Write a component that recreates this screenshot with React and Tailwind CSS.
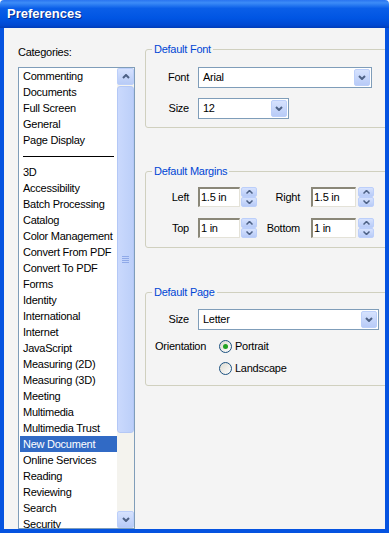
import React from "react"

const categories = [
    "Commenting",
    "Documents",
    "Full Screen",
    "General",
    "Page Display",
    "-",
    "3D",
    "Accessibility",
    "Batch Processing",
    "Catalog",
    "Color Management",
    "Convert From PDF",
    "Convert To PDF",
    "Forms",
    "Identity",
    "International",
    "Internet",
    "JavaScript",
    "Measuring (2D)",
    "Measuring (3D)",
    "Meeting",
    "Multimedia",
    "Multimedia Trust",
    "New Document",
    "Online Services",
    "Reading",
    "Reviewing",
    "Search",
    "Security"
]

const Chevron = ({ up }) => (
    <svg width="8" height="5" viewBox="0 0 8 5">
        <path d={up ? "M1 4 L4 1 L7 4" : "M1 1 L4 4 L7 1"} fill="none" stroke="#4d6185" strokeWidth="2" />
    </svg>
)

const SmallArrow = ({ up }) => (
    <svg width="7" height="4" viewBox="0 0 7 4">
        <path d={up ? "M0.5 3.5 L3.5 0.5 L6.5 3.5" : "M0.5 0.5 L3.5 3.5 L6.5 0.5"} fill="none" stroke="#4d6185" strokeWidth="1.5" />
    </svg>
)

const XpButton = ({ className, children }) => (
    <div className={`rounded-[2px] border border-[#bccffa] bg-[linear-gradient(to_bottom,#d6e2fe,#b8cbf7)] flex items-center justify-center ${className}`}>
        {children}
    </div>
)

const Select = ({ value, width }) => (
    <div className={`h-[21px] ${width} border border-[#7f9db9] bg-white flex items-stretch p-[1px]`}>
        <span className="flex-1 pl-[3px] leading-[17px]">{value}</span>
        <XpButton className="w-[16px]">
            <Chevron />
        </XpButton>
    </div>
)

const Spinner = () => (
    <div className="w-[16px] h-[20px] flex flex-col">
        <XpButton className="flex-1">
            <SmallArrow up />
        </XpButton>
        <XpButton className="flex-1">
            <SmallArrow />
        </XpButton>
    </div>
)

const Field = ({ value, width }) => (
    <div className={`h-[20px] ${width} bg-white border-t-2 border-l-2 border-t-[#8a8778] border-l-[#8a8778] border-b border-r border-b-[#e4e2d8] border-r-[#e4e2d8] pl-[1px] leading-[17px]`}>
        {value}
    </div>
)

const Radio = ({ checked, label }) => (
    <div className="flex items-center h-[16px]">
        <div className="w-[13px] h-[13px] rounded-full border border-[#1c5180] bg-[linear-gradient(135deg,#dcdad0,#ffffff)] flex items-center justify-center">
            {checked && <div className="w-[5px] h-[5px] rounded-full bg-[#21a121]" />}
        </div>
        <span className="ml-[3px]">{label}</span>
    </div>
)

const Group = ({ title, className, children }) => (
    <fieldset className={`border border-[#d0d0bf] rounded-[3px] ${className}`}>
        <legend className="ml-[6px] px-[2px] leading-[14px] text-[#0046d5]">{title}</legend>
        {children}
    </fieldset>
)

export default function App() {
    return (
        <div className="w-[389px] h-[533px] flex flex-col font-['Liberation_Sans',Arial,sans-serif] text-[11px] tracking-[-0.25px] text-black">
            {/* Title bar */}
            <div className="h-[28px] flex items-center pl-[7px] rounded-t-[4px] bg-[linear-gradient(to_bottom,#2a74f0_0%,#3d8cf7_10%,#0a5ee8_30%,#0055e3_65%,#0048d2_90%,#003cb8_100%)]">
                <span className="text-white font-bold text-[13px] tracking-normal [text-shadow:1px_1px_0_#0a2a8a]">Preferences</span>
            </div>

            {/* Body */}
            <div className="flex-1 flex overflow-hidden bg-[#f4f4f4] border-x-4 border-b-4 border-[#0553e0] pl-[14px]">
                {/* Categories */}
                <div className="w-[117px] flex flex-col shrink-0">
                    <div className="mt-[16px] h-[16px] leading-[16px]">Categories:</div>
                    <div className="mt-[7px] h-[462px] border border-[#7f9db9] bg-white flex overflow-hidden">
                        <div className="flex-1 overflow-hidden">
                            {categories.map((c, i) =>
                                c === "-" ? (
                                    <div key={i} className="h-[16px] flex items-center pl-[4px] pr-[3px]">
                                        <div className="h-[1px] w-full bg-black mt-[1px]" />
                                    </div>
                                ) : (
                                    <div
                                        key={i}
                                        className={`h-[16px] leading-[16px] ml-[1px] pl-[3px] whitespace-nowrap ${c === "New Document" ? "bg-[#316ac5] text-white" : ""}`}
                                    >
                                        {c}
                                    </div>
                                )
                            )}
                        </div>
                        {/* Scrollbar */}
                        <div className="w-[17px] flex flex-col bg-[#f4f3ee]">
                            <XpButton className="h-[17px]">
                                <Chevron up />
                            </XpButton>
                            <div className="h-[347px] mt-[1px] rounded-[3px] border border-[#b4c8f6] bg-[linear-gradient(to_right,#cad9fd,#bccff9)] flex flex-col items-center justify-center gap-[1px]">
                                <div className="w-[7px] h-[1px] bg-[#8fa9e8]" />
                                <div className="w-[7px] h-[1px] bg-[#8fa9e8]" />
                                <div className="w-[7px] h-[1px] bg-[#8fa9e8]" />
                                <div className="w-[7px] h-[1px] bg-[#8fa9e8]" />
                            </div>
                            <div className="flex-1" />
                            <XpButton className="h-[17px]">
                                <Chevron />
                            </XpButton>
                        </div>
                    </div>
                </div>

                {/* Settings */}
                <div className="ml-[10px] w-[260px] shrink-0 pt-[14px] flex flex-col">
                    <Group title="Default Font" className="pt-[11px] pb-[8px]">
                        <div className="flex items-center">
                            <span className="w-[43px] text-right">Font</span>
                            <div className="ml-[9px]">
                                <Select value="Arial" width="w-[174px]" />
                            </div>
                        </div>
                        <div className="flex items-center mt-[10px]">
                            <span className="w-[43px] text-right">Size</span>
                            <div className="ml-[9px]">
                                <Select value="12" width="w-[91px]" />
                            </div>
                        </div>
                    </Group>

                    <Group title="Default Margins" className="mt-[36px] pt-[9px] pb-[9px]">
                        <div className="flex items-center">
                            <span className="w-[43px] text-right">Left</span>
                            <div className="ml-[9px]"><Field value="1.5 in" width="w-[42px]" /></div>
                            <div className="ml-[1px]"><Spinner /></div>
                            <span className="w-[43px] text-right">Right</span>
                            <div className="ml-[11px]"><Field value="1.5 in" width="w-[45px]" /></div>
                            <div className="ml-[2px]"><Spinner /></div>
                        </div>
                        <div className="flex items-center mt-[11px]">
                            <span className="w-[43px] text-right">Top</span>
                            <div className="ml-[9px]"><Field value="1 in" width="w-[42px]" /></div>
                            <div className="ml-[1px]"><Spinner /></div>
                            <span className="w-[43px] text-right">Bottom</span>
                            <div className="ml-[11px]"><Field value="1 in" width="w-[45px]" /></div>
                            <div className="ml-[2px]"><Spinner /></div>
                        </div>
                    </Group>

                    <Group title="Default Page" className="mt-[37px] pt-[10px] pb-[9px]">
                        <div className="flex items-center">
                            <span className="w-[43px] text-right">Size</span>
                            <div className="ml-[9px]">
                                <Select value="Letter" width="w-[181px]" />
                            </div>
                        </div>
                        <div className="flex items-start mt-[8px] pl-[9px]">
                            <span className="w-[64px] leading-[16px]">Orientation</span>
                            <div className="flex flex-col gap-[6px]">
                                <Radio checked label="Portrait" />
                                <Radio label="Landscape" />
                            </div>
                        </div>
                    </Group>
                </div>
            </div>
        </div>
    )
}
